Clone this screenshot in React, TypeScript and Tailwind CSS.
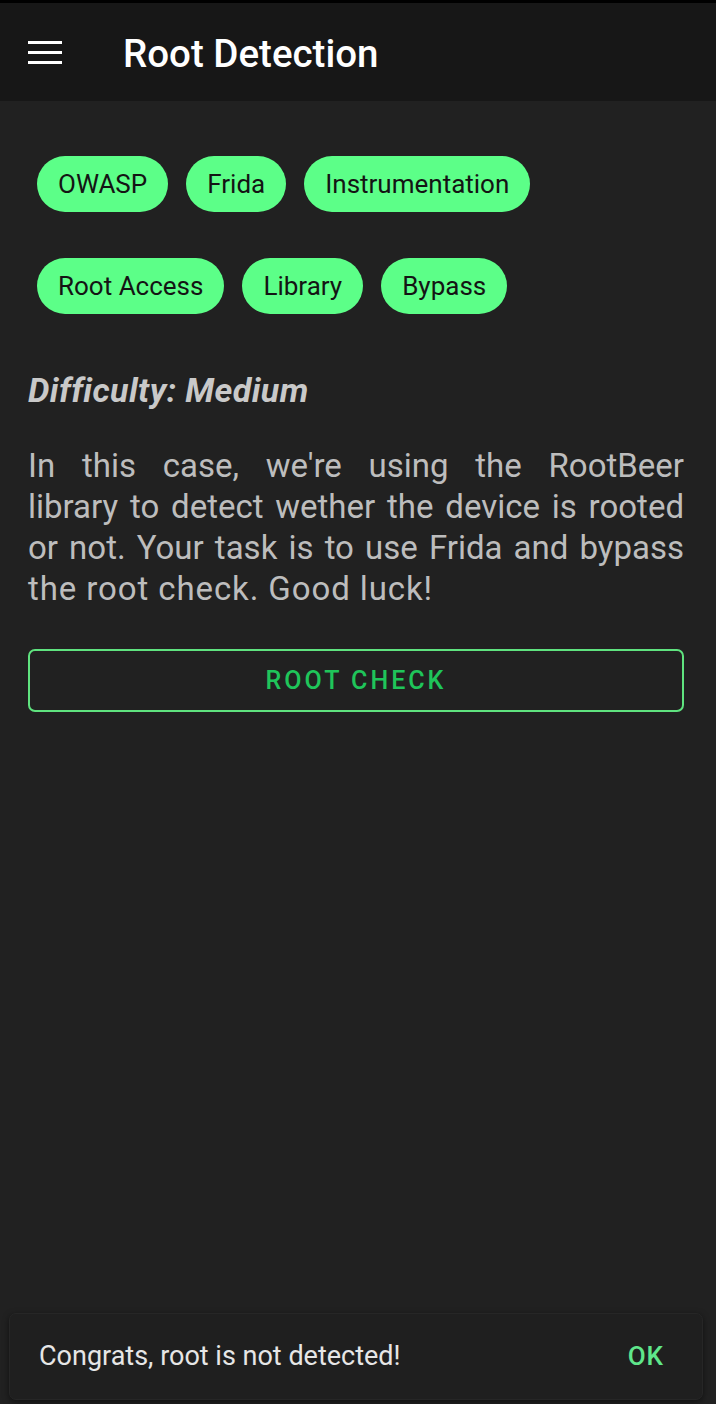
const tags = [
  ["OWASP", "Frida", "Instrumentation"],
  ["Root Access", "Library", "Bypass"],
];

const lines = [
  "In this case, we're using the RootBeer",
  "library to detect wether the device is rooted",
  "or not. Your task is to use Frida and bypass",
];

const Chip = ({ label }: { label: string }) => (
  <span className="flex h-[56px] items-center rounded-full bg-[#5cff88] px-[21px] text-[26px] text-[#141414]">
    {label}
  </span>
);

export default function App() {
  return (
    <div
      className="relative flex h-[1404px] w-[716px] flex-col overflow-hidden bg-[#212121]"
      style={{ fontFamily: "Roboto, 'Liberation Sans', sans-serif" }}
    >
      <div className="h-[3px] bg-black" />
      <header className="flex h-[98px] items-center bg-[#171717]">
        <div className="ml-[28px] flex w-[34px] flex-col gap-[7px]">
          <span className="h-[3px] bg-white" />
          <span className="h-[3px] bg-white" />
          <span className="h-[3px] bg-white" />
        </div>
        <h1 className="ml-[61px] mt-[3px] text-[38.5px] font-medium text-white">Root Detection</h1>
      </header>

      <main className="flex flex-col pl-[28px] pr-[32px] pt-[55px]">
        <div className="flex flex-col gap-[46px] pl-[9px]">
          {tags.map((row, i) => (
            <div key={i} className="flex gap-[18px]">
              {row.map((t) => (
                <Chip key={t} label={t} />
              ))}
            </div>
          ))}
        </div>

        <p className="mt-[51px] text-[34px] font-bold italic tracking-[0.4px] text-[#c9c9c9]">Difficulty: Medium</p>

        <p className="mt-[29px] text-[33px] leading-[41px] text-[#bdbdbd]">
          {lines.map((l) => (
            <span key={l} className="block whitespace-nowrap text-justify [text-align-last:justify]">
              {l}
            </span>
          ))}
          <span className="block tracking-[0.9px]">the root check. Good luck!</span>
        </p>

        <button className="mt-[40px] flex h-[63px] items-center justify-center rounded-[7px] border-2 border-[#5fe37f] text-[25px] font-medium tracking-[3px] text-[#1fc55a]">
          ROOT CHECK
        </button>
      </main>

      <div className="absolute bottom-[4px] left-[9px] right-[13px] flex h-[87px] items-center justify-between rounded-[7px] border border-[#262626] bg-[#1f1f1f] pl-[29px] pr-[38px] shadow-[0_2px_6px_rgba(0,0,0,0.5)]">
        <span className="text-[27px] text-[#e6e6e6]">Congrats, root is not detected!</span>
        <span className="text-[26px] font-medium tracking-[1px] text-[#5fe68b]">OK</span>
      </div>
    </div>
  );
}
